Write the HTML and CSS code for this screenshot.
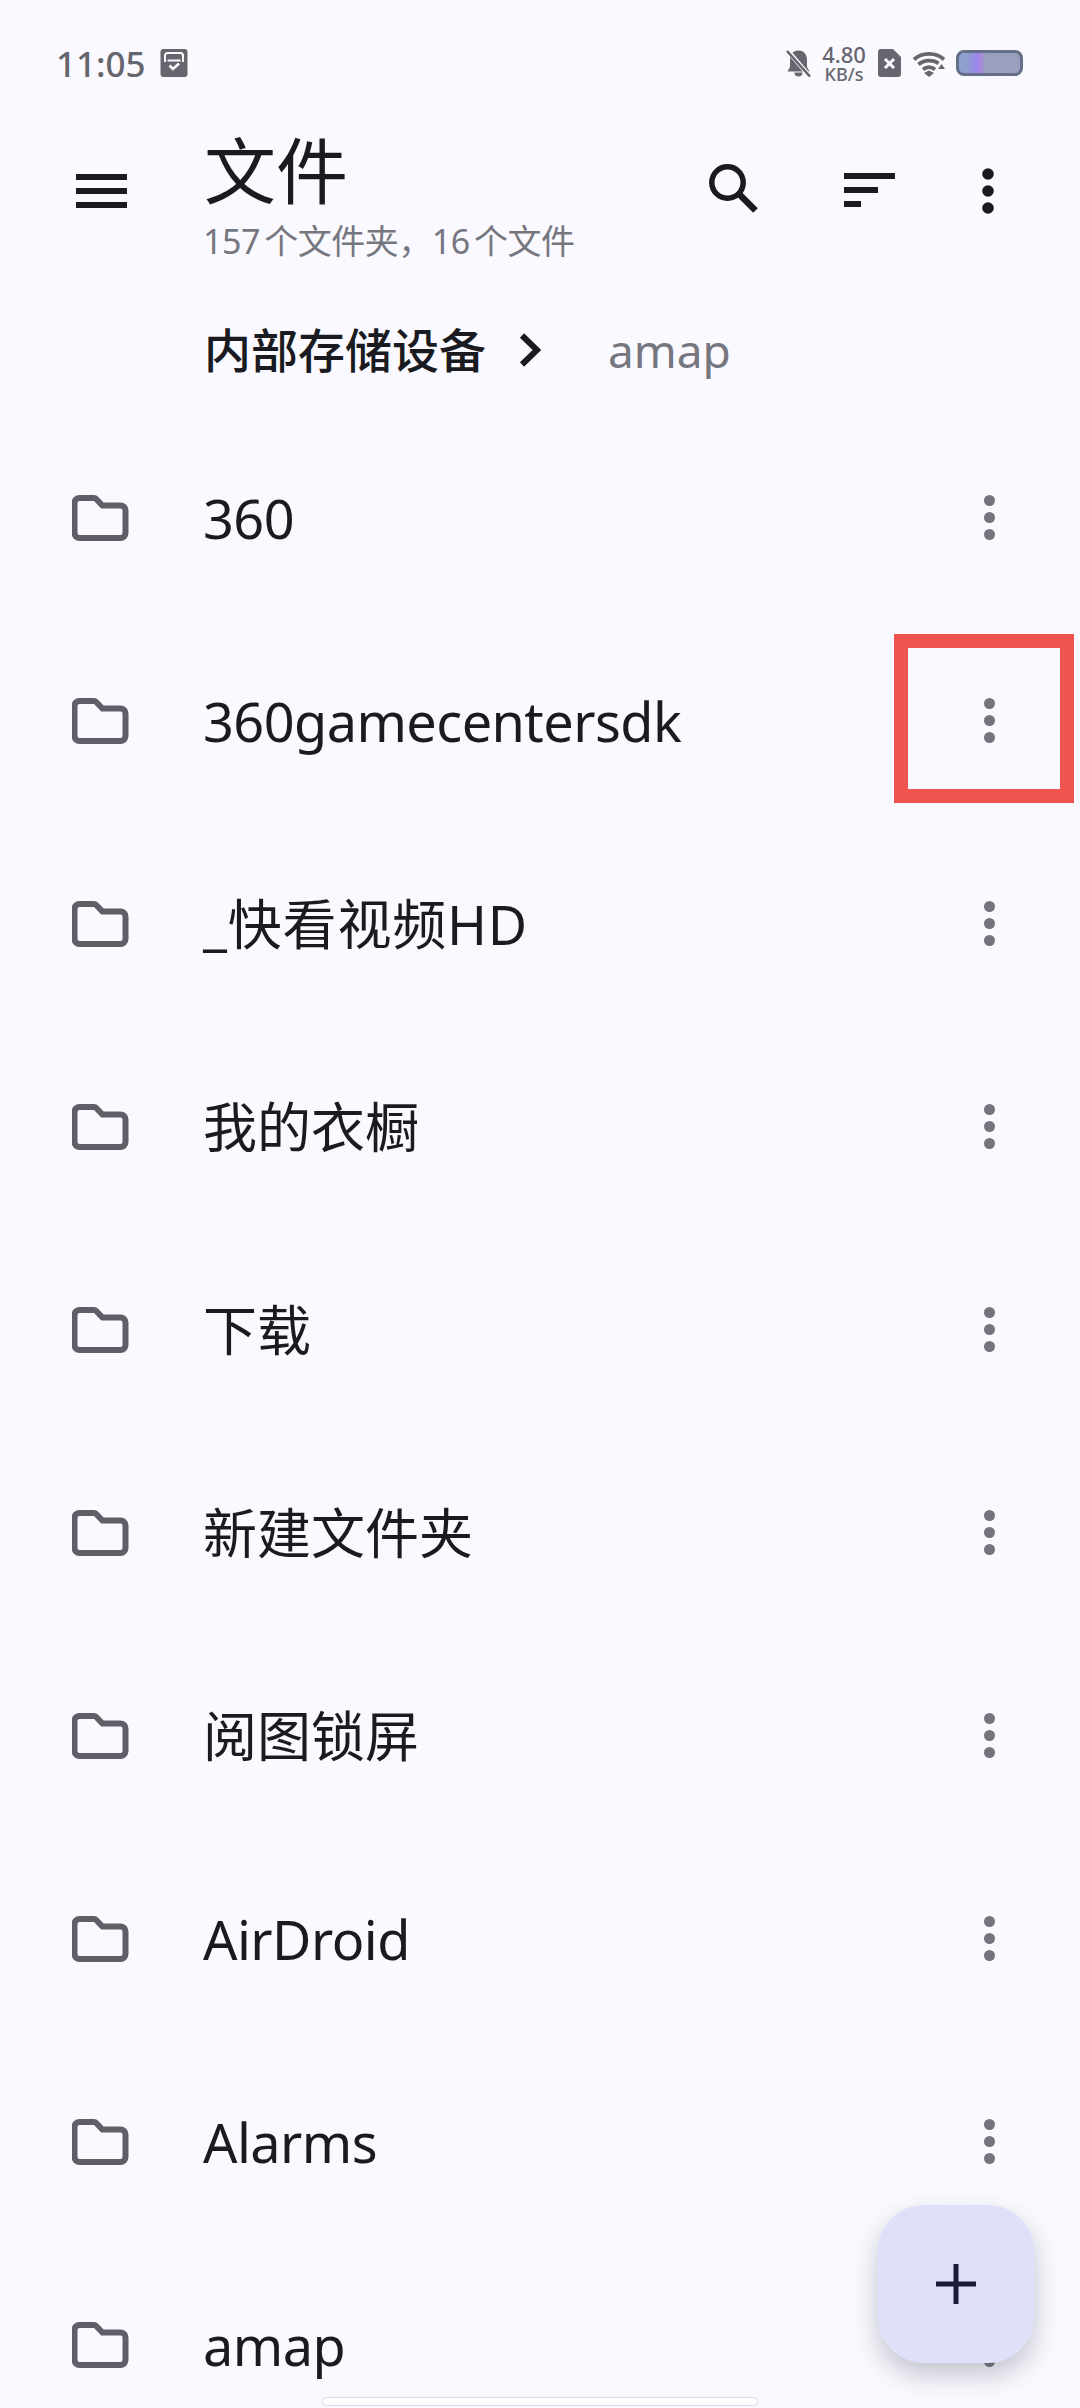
FILE: index.html
```html
<!DOCTYPE html>
<html lang="zh-CN">
<head>
<meta charset="utf-8">
<title>文件</title>
<link rel="stylesheet" href="styles.css">
</head>
<body>
<div class="screen">
  <header class="statusbar">
    <div class="status-left">
      <span class="time">11:05</span>
      <svg class="st-store" viewBox="0 0 27 28"><rect width="27" height="28" rx="3" fill="#66666e"/><path d="M4.500 13V6.500A2.500 2.500 0 0 1 7 4h13a2.500 2.500 0 0 1 2.500 2.500V13" fill="none" stroke="#f9f9ff" stroke-width="2"/><path d="M7 11.500h13" stroke="#f9f9ff" stroke-width="2"/><path d="M9 16.500l3.500 3.500 6-5.500" fill="none" stroke="#f9f9ff" stroke-width="2.600"/></svg>
    </div>
    <div class="status-right">
      <svg class="st-bell" viewBox="0 0 24 27"><path d="M12 0.500c-5.500 0-8.500 4-8.500 9.500v7L1 21.500h22l-2.500-4.500v-7C20.500 4.500 17.500 0.500 12 0.500z" fill="#66666e"/><path d="M8 22.500a4 4 0 0 0 8 0z" fill="#66666e"/><path d="M1 0.500L23 26" stroke="#f9f9ff" stroke-width="4.500"/><path d="M0.500 1L23.500 26.500" stroke="#66666e" stroke-width="2.600"/></svg>
      <span class="speed"><span class="speed-num">4.80</span><span class="speed-unit">KB/s</span></span>
      <svg class="st-sim" viewBox="0 0 23 28"><path d="M3 0h12l8 8v17a3 3 0 0 1-3 3H3a3 3 0 0 1-3-3V3a3 3 0 0 1 3-3z" fill="#66666e"/><path d="M7 10l9 9M16 10l-9 9" stroke="#f9f9ff" stroke-width="3"/></svg>
      <svg class="st-wifi" viewBox="0 0 33 27"><path d="M1.500 9.500C9.500 2 23.500 2 31.500 9.500" fill="none" stroke="#66666e" stroke-width="3.800"/><path d="M6 14.500C11.500 9.500 21 9.500 26 13.500" fill="none" stroke="#66666e" stroke-width="3.800"/><path d="M10.500 19.500c3.500-3 8.500-3 12 0" fill="none" stroke="#66666e" stroke-width="3.800"/><path d="M11.500 23l5-2.500 5 2.500-5 4z" fill="#66666e"/><path d="M25.500 19l3.500-5 3.500 5z" fill="#66666e"/></svg>
      <span class="battery"></span>
    </div>
  </header>

  <section class="appbar">
    <svg class="ic-menu" viewBox="0 0 51 34"><path d="M0 3h51M0 17h51M0 31h51" stroke="#1a1b20" stroke-width="6"/></svg>
    <div class="heading">
      <h1 class="title">文件</h1>
      <p class="subtitle">157 个文件夹，16 个文件</p>
    </div>
    <div class="actions">
      <svg class="ic-search" viewBox="0 0 49 49"><circle cx="18.500" cy="18.500" r="15.700" fill="none" stroke="#1a1b20" stroke-width="5.500"/><path d="M29.500 29.500L46.500 46.500" stroke="#1a1b20" stroke-width="6.500"/></svg>
      <svg class="ic-sort" viewBox="0 0 51 34"><path d="M0 3h51M0 17h34M0 31h17" stroke="#1a1b20" stroke-width="6"/></svg>
      <svg class="ic-more" viewBox="0 0 12 46"><circle cx="6" cy="6" r="5.800" fill="#1a1b20"/><circle cx="6" cy="23" r="5.800" fill="#1a1b20"/><circle cx="6" cy="40" r="5.800" fill="#1a1b20"/></svg>
    </div>
  </section>

  <nav class="crumbs">
    <span class="crumb">内部存储设备</span>
    <svg class="chev" viewBox="0 0 22 34"><path d="M3 2.500L18 17 3 31.500" fill="none" stroke="#1a1b20" stroke-width="6"/></svg>
    <span class="crumb-now">amap</span>
  </nav>

  <main class="list">
    <div class="row"><svg class="folder" viewBox="0 0 57 46"><use href="#fld"/></svg><span class="name latin">360</span><svg class="dots" viewBox="0 0 11 45"><use href="#dts"/></svg></div>
    <div class="row"><svg class="folder" viewBox="0 0 57 46"><use href="#fld"/></svg><span class="name latin">360gamecentersdk</span><svg class="dots" viewBox="0 0 11 45"><use href="#dts"/></svg></div>
    <div class="row"><svg class="folder" viewBox="0 0 57 46"><use href="#fld"/></svg><span class="name mixed">_快看视频HD</span><svg class="dots" viewBox="0 0 11 45"><use href="#dts"/></svg></div>
    <div class="row"><svg class="folder" viewBox="0 0 57 46"><use href="#fld"/></svg><span class="name">我的衣橱</span><svg class="dots" viewBox="0 0 11 45"><use href="#dts"/></svg></div>
    <div class="row"><svg class="folder" viewBox="0 0 57 46"><use href="#fld"/></svg><span class="name">下载</span><svg class="dots" viewBox="0 0 11 45"><use href="#dts"/></svg></div>
    <div class="row"><svg class="folder" viewBox="0 0 57 46"><use href="#fld"/></svg><span class="name">新建文件夹</span><svg class="dots" viewBox="0 0 11 45"><use href="#dts"/></svg></div>
    <div class="row"><svg class="folder" viewBox="0 0 57 46"><use href="#fld"/></svg><span class="name">阅图锁屏</span><svg class="dots" viewBox="0 0 11 45"><use href="#dts"/></svg></div>
    <div class="row"><svg class="folder" viewBox="0 0 57 46"><use href="#fld"/></svg><span class="name latin">AirDroid</span><svg class="dots" viewBox="0 0 11 45"><use href="#dts"/></svg></div>
    <div class="row"><svg class="folder" viewBox="0 0 57 46"><use href="#fld"/></svg><span class="name latin">Alarms</span><svg class="dots" viewBox="0 0 11 45"><use href="#dts"/></svg></div>
    <div class="row"><svg class="folder" viewBox="0 0 57 46"><use href="#fld"/></svg><span class="name latin">amap</span><svg class="dots" viewBox="0 0 11 45"><use href="#dts"/></svg></div>
  </main>

  <div class="marker"></div>
  <button class="fab" type="button"><svg class="ic-plus" viewBox="0 0 40 40"><path d="M20 0v40M0 20h40" stroke="#191b38" stroke-width="5"/></svg></button>
  <div class="home"></div>

  <svg class="defs" width="0" height="0">
    <defs>
      <g id="fld"><path d="M8 3h14.500a3 3 0 0 1 2.200 1L31 10.500h18a5 5 0 0 1 5 5V38a5 5 0 0 1-5 5H8a5 5 0 0 1-5-5V8a5 5 0 0 1 5-5z" transform="translate(-.5 0)" fill="none" stroke="#5f5f67" stroke-width="6"/></g>
      <g id="dts"><circle cx="5.500" cy="5.500" r="5.500" fill="#74747c"/><circle cx="5.500" cy="22.500" r="5.500" fill="#74747c"/><circle cx="5.500" cy="39.500" r="5.500" fill="#74747c"/></g>
    </defs>
  </svg>
</div>
</body>
</html>
```

FILE: styles.css
```css
* { box-sizing: border-box; margin: 0; padding: 0; }
html, body { width: 1080px; height: 2408px; overflow: hidden; background: #f9f9ff; }
body { font-family: "Noto Sans", "Noto Sans CJK SC", sans-serif; color: #1a1b20; }
.screen { position: relative; width: 1080px; height: 2408px; overflow: hidden; }

.statusbar { height: 126px; display: flex; align-items: center; justify-content: space-between; padding: 0 57px 0 56px; }
.status-left, .status-right { display: flex; align-items: center; }
.time { font-size: 35px; font-weight: 500; color: #66666e; line-height: 1; }
.st-store { width: 28px; height: 28px; margin-left: 14px; }
.st-bell { width: 25px; height: 27px; }
.speed { display: flex; flex-direction: column; align-items: center; margin-left: 11px; width: 44px; color: #66666e; font-weight: 500; }
.speed-num { font-size: 22px; line-height: 21px; }
.speed-unit { font-size: 18px; line-height: 18px; }
.st-sim { width: 23px; height: 28px; margin-left: 12px; }
.st-wifi { width: 34px; height: 27px; margin-left: 11px; }
.battery { width: 67px; height: 26px; margin-left: 10px; border: 3px solid #666f88; border-radius: 8px; background: linear-gradient(90deg, #8f9fd0 0 14%, #9b86ec 29%, #a98ad8 38%, #9a9fbd 42%, #9a9fbd 100%); }

.appbar { height: 140px; display: flex; align-items: flex-start; padding-left: 76px; }
.ic-menu { width: 51px; height: 34px; margin-top: 48px; flex: none; }
.heading { margin-left: 77px; width: 450px; flex: none; }
.title { font-size: 72px; font-weight: 400; line-height: 88px; }
.subtitle { font-size: 34px; line-height: 40px; margin-top: 7px; margin-left: -1px; color: #76767e; white-space: nowrap; letter-spacing: -.5px; word-spacing: -4px; }
.actions { display: flex; align-items: flex-start; flex: none; }
.ic-search { width: 49px; height: 49px; margin-left: 55px; margin-top: 38px; flex: none; }
.ic-sort { width: 51px; height: 34px; margin-left: 86px; margin-top: 47px; flex: none; }
.ic-more { width: 12px; height: 46px; margin-left: 87px; margin-top: 42px; flex: none; }

.crumbs { height: 150px; display: flex; align-items: center; padding-left: 204px; padding-top: 18px; }
.crumb { font-size: 47px; font-weight: 500; line-height: 60px; }
.chev { width: 22px; height: 34px; margin-left: 33px; flex: none; }
.crumb-now { font-size: 46px; line-height: 60px; color: #76767e; margin-left: 67px; }

.row { height: 203px; display: flex; align-items: center; padding-left: 72px; }
.folder { width: 57px; height: 46px; flex: none; }
.name { font-size: 54px; line-height: 70px; margin-left: 74px; flex: 1; white-space: nowrap; }
.latin { letter-spacing: -.55px; }
.mixed { letter-spacing: .8px; }
.dots { width: 11px; height: 45px; flex: none; margin-right: 85px; }

.marker { position: absolute; left: 894px; top: 634px; width: 180px; height: 169px; border: 14px solid #ef554e; }
.fab { position: absolute; left: 878px; top: 2205px; width: 156px; height: 158px; border: none; border-radius: 46px; background: #dfe0f9; display: flex; align-items: center; justify-content: center; box-shadow: 0 12px 26px rgba(60, 60, 80, .28); }
.ic-plus { width: 40px; height: 40px; }
.home { position: absolute; left: 322px; top: 2397px; width: 436px; height: 9px; border-radius: 5px; background: #fff; border: 1px solid #dcdce4; }
.defs { position: absolute; }
```
